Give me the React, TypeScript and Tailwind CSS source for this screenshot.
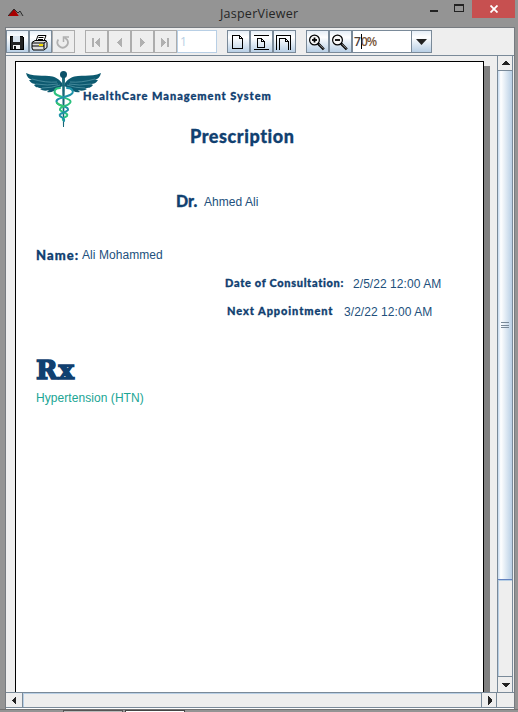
import React from "react";

const BTN = "h-[23px] w-[23px] shrink-0 border pt-[2px] pl-px ";
const ON = "border-[#7a8a99] bg-linear-to-b from-[#e6eef6] via-[#ffffff] via-30% to-[#b8cfe5]";
const OFF = "border-[#adadad] bg-[#eeeeee]";

function Btn({ off = false, children }: { off?: boolean; children: React.ReactNode }) {
  return (
    <button className={BTN + (off ? OFF : ON)}>
      <svg width="17" height="17" viewBox="0 0 17 17" fill="none" stroke={off ? "#b0b0b0" : "#000"} shapeRendering="crispEdges">
        {children}
      </svg>
    </button>
  );
}

function Lens({ plus = false }: { plus?: boolean }) {
  return (
    <g shapeRendering="auto">
      <circle cx="6.5" cy="6" r="4.9" strokeWidth="1.2" fill="#f8f8f8" />
      <path d="M4 6h5" strokeWidth="1.8" />
      {plus && <path d="M6.5 3.5v5" strokeWidth="1.8" />}
      <path d="M10 9.500l5.800 5.800" strokeWidth="2.600" />
      <path d="M11 10.200l4.400 4.400" stroke="#bbb" strokeWidth=".8" />
    </g>
  );
}

function Caduceus() {
  const wing =
    "M36 12C32 7 28 5.500 23 5C16 4 8 6 0 2C1 6 3 8 6 9C5 9 4 9 3 9C5 12 7 13 10 13L8 14C10 17 13 17 16 17L14 18C17 20 20 20 23 19L21 21C25 22 29 20 32 17L37 15Z";
  return (
    <svg className="h-[56px] w-[76px] shrink-0" viewBox="0 0 76 56">
      <g fill="#0d5a70">
        <path d={wing} />
        <path d={wing} transform="translate(75 0) scale(-1 1)" />
      </g>
      <g fill="none" stroke="#5f9eac" strokeWidth=".7">
        <path d="M6 8Q20 12 31 11M10 13Q22 15 32 13M16 17Q26 17 34 14" />
        <path d="M69 8Q55 12 44 11M65 13Q53 15 43 13M59 17Q49 17 41 14" />
      </g>
      <path d="M36 6h3L38 56h-1z" fill="#176777" />
      <circle cx="37.500" cy="3.500" r="3.500" fill="#0c5269" />
      <g fill="none" strokeWidth="2" strokeLinecap="round">
        <path d="M34 17C28 17 27 22 31 24C37 27 47 28 44 32C41 36 33 35 34 39C36 42 43 42 41 45C39 47 36 46 37 49" stroke="#2bc17f" />
        <path d="M41 17C47 17 49 22 44 24C38 27 28 27 31 32C34 36 43 35 42 39C40 42 32 42 34 45C36 47 39 47 38 50" stroke="#1e92a8" />
        <path d="M31 32Q34 35 38 35.500" stroke="#35c770" />
      </g>
    </svg>
  );
}

function Arrow({ d }: { d: string }) {
  return <svg width="9" height="9" viewBox="0 0 9 9" fill="#222" shapeRendering="crispEdges"><path d={d} /></svg>;
}

const HEAVY = "font-['Lato'] font-black whitespace-nowrap [-webkit-text-stroke:0.3px_#104070] ";
const BODY = "font-['Liberation_Sans'] text-[12px] whitespace-nowrap tracking-[0.06px] ";

export default function App() {
  return (
    <div className="flex h-[712px] w-[518px] flex-col overflow-hidden bg-[#949494]">
      <header className="flex h-[27px] shrink-0 items-start">
        <svg className="mt-[9px] ml-[8px] h-[8px] w-[16px]" viewBox="0 0 16 8">
          <path d="M0 7L6 0L11 7z" fill="#a80000" />
          <path d="M9 4L12 2L15 7H11z" fill="#888" />
          <path d="M0 7L6 0L10 4L12 2L15 7" fill="none" stroke="#222" strokeWidth=".9" />
        </svg>
        <h1 className="ml-[196px] w-[80px] pt-[5px] font-['Open_Sans'] text-[12.5px] leading-[18px] tracking-[0.24px] text-[#252525]">JasperViewer</h1>
        <div className="ml-[130px] mt-[10px] h-[2px] w-[8px] bg-[#222]" />
        <div className="ml-[16px] mt-[4px] h-[8px] w-[10px] border border-t-2 border-[#222]" />
        <div className="ml-[8px] grid h-[18px] w-[43px] place-items-center bg-[#c75050]">
          <svg width="8" height="8" viewBox="0 0 8 8" stroke="#fff" strokeWidth="1.8"><path d="M.5.5l7 7M7.500.5l-7 7" /></svg>
        </div>
      </header>

      <main className="ml-[5px] flex h-[682px] w-[510px] shrink-0 flex-col border-t border-r border-l border-[#777b80] bg-[#eeeeee]">
        <div className="flex h-[28px] shrink-0 border-b border-[#7a8a99] pt-[2px]">
          <Btn><path d="M2 2h12l1 1v12H2z" fill="#222" strokeWidth="1" /><path d="M5 2h7v6H5z" fill="#d9e4ee" stroke="none" /><path d="M5 11h7v4H5z" fill="#eee" stroke="none" /><path d="M6 12h2v3H6z" fill="#111" stroke="none" /></Btn>
          <Btn>
            <g shapeRendering="auto"><path d="M5 7L7 1.500h8L13 7z" fill="#fff" /><path d="M7.500 3.500h5M7 5.500h5" /><path d="M1 8.500L4 6.500h11l1 2v5L13 16H2l-1-2z" fill="#ddd" /><path d="M1 9h12l3-2M1 12h12M13 9v6" /><path d="M8 11h4" stroke="#f3dc00" strokeWidth="2" /></g>
          </Btn>
          <Btn off><g shapeRendering="auto"><path d="M4.300 5.500A5.200 5.200 0 1 0 13 5.500L10.500 3.500" strokeWidth="1.800" /><path d="M15 3H9.500V8" strokeWidth="1.500" /></g></Btn>
          <div className="w-[10px]" />
          <Btn off><path d="M5 4h2v9H5zM13 4v9L8 8.500z" fill="#b0b0b0" stroke="none" /></Btn>
          <Btn off><path d="M12 4v9L7 8.500z" fill="#b0b0b0" stroke="none" /></Btn>
          <Btn off><path d="M7 4v9l5-4.500z" fill="#b0b0b0" stroke="none" /></Btn>
          <Btn off><path d="M5 4v9l5-4.500zM11 4h2v9h-2z" fill="#b0b0b0" stroke="none" /></Btn>
          <div className="h-[23px] w-[40px] border border-[#b8cfe5] bg-white pl-[2px] font-['Open_Sans'] text-[12px] leading-[22px] text-[#b8cfe5]">1</div>
          <div className="w-[10px]" />
          <Btn><path d="M3.500 1.500h7l3 3v10h-10zM10.500 1.500v3h3" strokeWidth="1.200" /></Btn>
          <Btn><path d="M1.500 1.500h15M1.500 15.500h15M5.500 4.500h4l3 3v6h-7zM9.500 4.500v3h3" strokeWidth="1.200" /></Btn>
          <Btn><path d="M1.500 16V1.500h14V16M4.500 16V4.500h6l3 3V16M10.500 4.500v3h3" strokeWidth="1.200" /></Btn>
          <div className="w-[10px]" />
          <Btn><Lens plus /></Btn>
          <Btn><Lens /></Btn>
          <div className="flex h-[23px] w-[60px] border border-[#7a8a99] bg-white pl-px font-['Open_Sans'] text-[12px] leading-[22px] text-[#333]">
            <span className="font-semibold text-[#4d4038]">7</span><span className="mt-[3px] h-[15px] w-px bg-black" /><span className="-ml-px font-semibold tracking-[-0.9px] text-[#7a5638]">0%</span>
          </div>
          <div className={"grid h-[23px] w-[20px] place-items-center border border-l-0 " + ON}>
            <svg width="11" height="6" viewBox="0 0 11 6" fill="#222"><path d="M0 0h11L5.500 6z" /></svg>
          </div>
        </div>

        <div className="flex h-[636px] shrink-0">
          <div className="flex w-[491px] overflow-hidden pt-[5px] pl-[9px]">
            <article className="flex h-[640px] w-[469px] shrink-0 flex-col border border-b-0 border-black bg-white text-[#104070]">
              <div className="mt-[9px] flex h-[56px] pl-[10px]">
                <Caduceus />
                <p className={HEAVY + "-ml-[19px] mt-[17px] text-[11px] leading-[16px] tracking-[0.97px]"}>HealthCare Management System</p>
              </div>
              <h2 className={HEAVY + "ml-[174px] h-[18px] text-[18px] leading-[18px] tracking-[0.56px]"}>Prescription</h2>
              <div className="mt-[47px] ml-[160px] flex h-[20px]">
                <b className={HEAVY + "w-[28px] text-[16px] leading-[18px]"}>Dr.</b>
                <span className={BODY + "leading-[20px] text-[#22507c]"}>Ahmed Ali</span>
              </div>
              <div className="mt-[34px] ml-[20px] flex h-[18px]">
                <b className={HEAVY + "w-[46px] text-[13px] leading-[19px] tracking-[1.05px]"}>Name:</b>
                <span className={BODY + "leading-[18px] text-[#22507c]"}>Ali Mohammed</span>
              </div>
              <div className="mt-[11px] ml-[209px] flex h-[16px]">
                <b className={HEAVY + "w-[128px] text-[11px] leading-[16px] tracking-[0.68px]"}>Date of Consultation:</b>
                <span className={BODY + "leading-[18px] text-[#22507c]"}>2/5/22 12:00 AM</span>
              </div>
              <div className="mt-[12px] ml-[211px] flex h-[16px]">
                <b className={HEAVY + "w-[117px] text-[11px] leading-[16px] tracking-[0.92px]"}>Next Appointment</b>
                <span className={BODY + "leading-[18px] text-[#22507c]"}>3/2/22 12:00 AM</span>
              </div>
              <div className="mt-[36px] ml-[20px] h-[28px] font-['DejaVu_Serif'] text-[26px] leading-[30px] font-black tracking-[0.8px] [-webkit-text-stroke:1.5px_#104070]">Rx</div>
              <p className={BODY + "mt-[7px] ml-[20px] leading-[16px] text-[#20a594]"}>Hypertension (HTN)</p>
            </article>
            <div className="mt-[5px] w-[6px] shrink-0 bg-[#808080]" />
          </div>
          <div className="flex w-[16px] shrink-0 flex-col border-x border-[#7a8a99]">
            <div className="grid h-[15px] shrink-0 place-items-center border-b border-[#7a8a99]"><Arrow d="M0 6h9L5 2H4z" /></div>
            <div className="grid h-[509px] shrink-0 place-items-center border-b border-[#6382bf] bg-linear-to-r from-[#c4d9ef] via-white via-20% to-[#b8cfe5]">
              <div className="flex h-[6px] w-[8px] flex-col justify-between"><i className="h-px bg-[#7a8a99]" /><i className="h-px bg-[#7a8a99]" /><i className="h-px bg-[#7a8a99]" /></div>
            </div>
            <div className="grow border-t border-l border-[#b8cfe5]" />
            <div className="grid h-[16px] shrink-0 place-items-center border-t border-[#7a8a99]"><Arrow d="M0 3h9L5 7H4z" /></div>
          </div>
        </div>

        <div className="flex h-[16px] shrink-0 border-y border-[#7a8a99]">
          <div className="grid w-[17px] place-items-center border-r border-[#7a8a99]"><Arrow d="M6 0v9L2 5V4z" /></div>
          <div className="w-[458px] border-t border-l border-[#b8cfe5]" />
          <div className="grid w-[16px] place-items-center border-x border-[#7a8a99]"><Arrow d="M3 0v9L7 5V4z" /></div>
        </div>
        <div className="h-px shrink-0 bg-white" />
      </main>
      <footer className="flex h-[3px] items-end border-t border-[#737373]">
        <div className="ml-[63px] h-[2px] w-[60px] border border-b-0 border-[#555] bg-[#bbb]" />
        <div className="ml-[2px] h-[2px] w-[60px] border border-b-0 border-[#444] bg-white" />
      </footer>
    </div>
  );
}
